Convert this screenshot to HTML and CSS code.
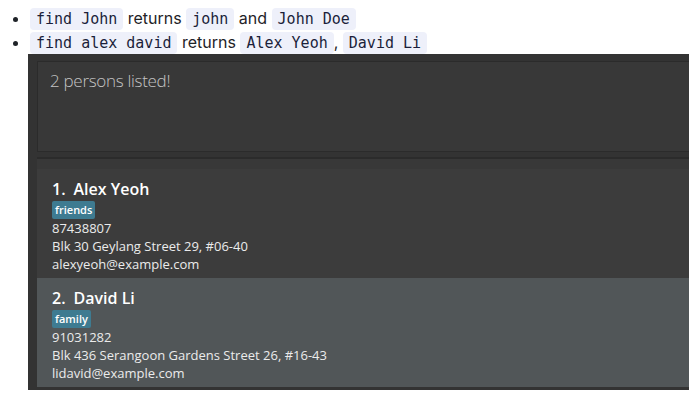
FILE: index.html
```html
<!DOCTYPE html>
<html lang="en">
<head>
<meta charset="utf-8">
<title>Find command example</title>
<link rel="stylesheet" href="styles.css">
</head>
<body>
<ul class="examples">
  <li><code>find John</code> returns <code>john</code> and <code>John Doe</code></li>
  <li><code>find alex david</code> returns <code>Alex Yeoh</code>, <code>David Li</code></li>
</ul>
<div class="shot">
  <div class="result"><span class="result-text">2 persons listed!</span></div>
  <div class="divider"></div>
  <div class="list">
    <div class="card">
      <div class="name"><span class="idx">1.</span><span>Alex Yeoh</span></div>
      <div class="tags"><span class="tag">friends</span></div>
      <div class="detail">87438807</div>
      <div class="detail">Blk 30 Geylang Street 29, #06-40</div>
      <div class="detail">alexyeoh@example.com</div>
    </div>
    <div class="card card-alt">
      <div class="name"><span class="idx">2.</span><span>David Li</span></div>
      <div class="tags"><span class="tag">family</span></div>
      <div class="detail">91031282</div>
      <div class="detail">Blk 436 Serangoon Gardens Street 26, #16-43</div>
      <div class="detail">lidavid@example.com</div>
    </div>
  </div>
</div>
</body>
</html>
```
FILE: styles.css
```css
html, body {
  margin: 0;
  padding: 0;
  background: #ffffff;
}
body {
  font-family: Inter, "Liberation Sans", sans-serif;
  font-size: 16px;
  color: #1f2328;
}
.examples {
  margin: 6px 0 0 0;
  padding-left: 30px;
  line-height: 24px;
}
.examples code {
  font-family: "DejaVu Sans Mono", monospace;
  font-size: 15px;
  line-height: 16px;
  color: #1b1f3a;
  background: #eef0fa;
  border-radius: 4px;
  padding: 2px 6px;
}
.shot {
  margin-left: 28px;
  width: 661px;
  box-sizing: border-box;
  background: #333333;
  padding: 7px 0 3px 9px;
  display: flex;
  flex-direction: column;
  overflow: hidden;
  font-family: "Open Sans", "Noto Sans", sans-serif;
}
.result {
  height: 91px;
  box-sizing: border-box;
  background: #383838;
  border: 1px solid #2b2b2b;
  border-right: none;
  padding: 7px 0 0 12px;
}
.result-text {
  font-size: 17px;
  font-weight: 300;
  letter-spacing: -0.3px;
  line-height: 24px;
  color: #c4c4c4;
}
.divider {
  margin-top: 5px;
  height: 2px;
  background: #2b2b2b;
}
.list {
  background: #383838;
  padding-top: 10px;
  display: flex;
  flex-direction: column;
}
.card {
  height: 109px;
  box-sizing: border-box;
  background: #3c3c3c;
  padding: 9px 0 0 15px;
  display: flex;
  flex-direction: column;
  align-items: flex-start;
}
.card-alt {
  background: #515658;
}
.name {
  display: flex;
  gap: 8px;
  font-size: 16px;
  font-weight: 600;
  line-height: 22px;
  color: #ffffff;
}
.tags {
  margin-top: 1px;
  display: flex;
}
.tag {
  height: 18px;
  box-sizing: border-box;
  padding: 0 3px;
  background: #3e7b91;
  color: #ffffff;
  font-size: 11px;
  font-weight: 600;
  line-height: 18px;
  border-radius: 2px;
}
.detail {
  font-size: 13px;
  line-height: 18px;
  color: #ebebeb;
}
```
